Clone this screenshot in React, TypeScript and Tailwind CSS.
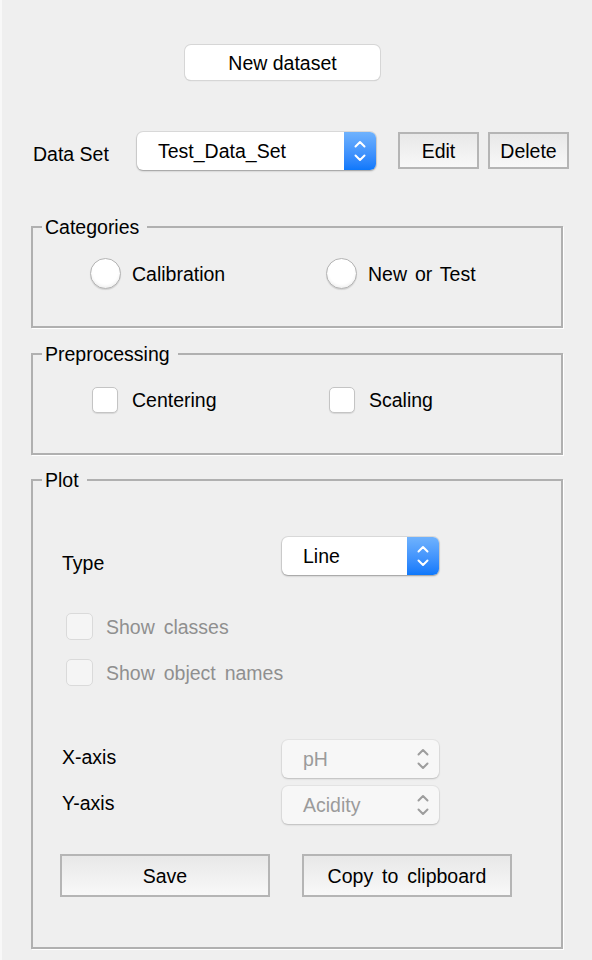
import React from "react";

const Chevrons = ({ color }: { color: string }) => (
  <svg width="12" height="22" viewBox="0 0 12 22" fill="none" stroke={color} strokeWidth="2" strokeLinecap="round" strokeLinejoin="round">
    <path d="M1.5 6.5 L6 2 L10.5 6.5" />
    <path d="M1.5 15.5 L6 20 L10.5 15.5" />
  </svg>
);

const Popup = ({ value, className, disabled }: { value: string; className: string; disabled?: boolean }) => (
  <div
    className={`flex h-[38px] rounded-[6px] ${
      disabled
        ? "bg-[#f7f7f7] text-[#9b9b9b] shadow-[0_0_0_1px_rgba(0,0,0,0.04),0_1px_2px_rgba(0,0,0,0.18)]"
        : "bg-white shadow-[0_0_0_1px_rgba(0,0,0,0.08),0_1px_2px_rgba(0,0,0,0.3)]"
    } ${className}`}
  >
    <div className="flex-1 flex items-center pl-[21px] leading-[22px]">{value}</div>
    <div
      className={`w-[32px] flex items-center justify-center rounded-r-[6px] ${
        disabled ? "" : "bg-linear-to-b from-[#6fb2fd] to-[#0c78fb]"
      }`}
    >
      <Chevrons color={disabled ? "#9d9d9d" : "#ffffff"} />
    </div>
  </div>
);

const GrayButton = ({ label, className }: { label: string; className: string }) => (
  <div
    className={`flex items-center justify-center border-2 border-[#b5b5b5] bg-linear-to-b from-[#e8e8e8] to-[#f8f8f8] leading-[22px] ${className}`}
  >
    {label}
  </div>
);

const Group = ({ title, className, children }: { title: string; className: string; children: React.ReactNode }) => (
  <fieldset
    className={`ml-[31px] w-[532px] border-2 border-[#b0b0b0] shadow-[1px_1px_0_#ffffff] ${className}`}
  >
    <legend className="ml-[9px] pl-[3px] pr-[8px] leading-[22px]">{title}</legend>
    {children}
  </fieldset>
);

const Radio = ({ label, className }: { label: string; className: string }) => (
  <div className={`flex items-center ${className}`}>
    <div className="w-[31px] h-[31px] rounded-full bg-white border border-[#b4b4b4] shadow-[inset_0_-2px_3px_rgba(0,0,0,0.06),0_1px_1px_rgba(0,0,0,0.12)]" />
    <span className="ml-[11px] leading-[22px] [word-spacing:2.5px]">{label}</span>
  </div>
);

const Check = ({ label, className, disabled }: { label: string; className: string; disabled?: boolean }) => (
  <div className={`flex items-center ${className}`}>
    <div
      className={
        disabled
          ? "w-[27px] h-[27px] rounded-[5px] bg-[#f5f5f5] border border-[#dadada]"
          : "w-[26px] h-[26px] rounded-[5px] bg-white border border-[#c4c4c4] shadow-[0_1px_1px_rgba(0,0,0,0.1)]"
      }
    />
    <span className={`leading-[22px] ${disabled ? "ml-[13px] text-[#8f8f8f] [word-spacing:3.5px]" : "ml-[14px]"}`}>{label}</span>
  </div>
);

export default function App() {
  return (
    <div className="min-h-[960px] w-[592px] bg-[#efefef] shadow-[inset_2px_0_0_#f8f8f8] text-[19.5px] text-black font-['Liberation_Sans',Arial,sans-serif] pt-[45px] pb-[12px]">
      {/* New dataset */}
      <div className="pl-[185px]">
        <div className="flex items-center justify-center h-[35px] w-[195px] rounded-[6px] bg-white shadow-[0_0_0_1px_#d6d6d6,0_1px_1px_rgba(0,0,0,0.22)] leading-[22px]">
          New dataset
        </div>
      </div>

      {/* Data set row */}
      <div className="mt-[52px] flex items-start h-[38px]">
        <div className="w-[137px] pl-[33px] pt-[11px] leading-[22px]">Data Set</div>
        <Popup value="Test_Data_Set" className="w-[239px]" />
        <GrayButton label="Edit" className="ml-[22px] w-[81px] h-[37px]" />
        <GrayButton label="Delete" className="ml-[9px] w-[81px] h-[37px]" />
      </div>

      {/* Categories */}
      <Group title="Categories" className="mt-[46px] pb-[37px]">
        <div className="mt-[20px] flex h-[31px] pl-[57px]">
          <Radio label="Calibration" className="w-[236px]" />
          <Radio label="New or Test" className="" />
        </div>
      </Group>

      {/* Preprocessing */}
      <Group title="Preprocessing" className="mt-[15px] pb-[40px]">
        <div className="mt-[22px] flex h-[26px] pl-[59px]">
          <Check label="Centering" className="w-[237px]" />
          <Check label="Scaling" className="" />
        </div>
      </Group>

      {/* Plot */}
      <Group title="Plot" className="mt-[14px] pb-[50px]">
        <div className="mt-[46px] flex items-start h-[38px]">
          <div className="w-[249px] pl-[29px] pt-[15px] leading-[22px]">Type</div>
          <Popup value="Line" className="w-[157px]" />
        </div>

        <div className="mt-[38px] flex flex-col gap-[19px] pl-[33px]">
          <Check label="Show classes" className="h-[27px]" disabled />
          <Check label="Show object names" className="h-[27px]" disabled />
        </div>

        <div className="mt-[54px] flex items-start h-[38px]">
          <div className="w-[249px] pl-[29px] pt-[6px] leading-[22px]">X-axis</div>
          <Popup value="pH" className="w-[157px]" disabled />
        </div>
        <div className="mt-[8px] flex items-start h-[38px]">
          <div className="w-[249px] pl-[29px] pt-[6px] leading-[22px]">Y-axis</div>
          <Popup value="Acidity" className="w-[157px]" disabled />
        </div>

        <div className="mt-[30px] flex pl-[27px]">
          <GrayButton label="Save" className="w-[210px] h-[43px]" />
          <GrayButton label="Copy to clipboard" className="ml-[32px] w-[210px] h-[43px] [word-spacing:3.5px]" />
        </div>
      </Group>
    </div>
  );
}
